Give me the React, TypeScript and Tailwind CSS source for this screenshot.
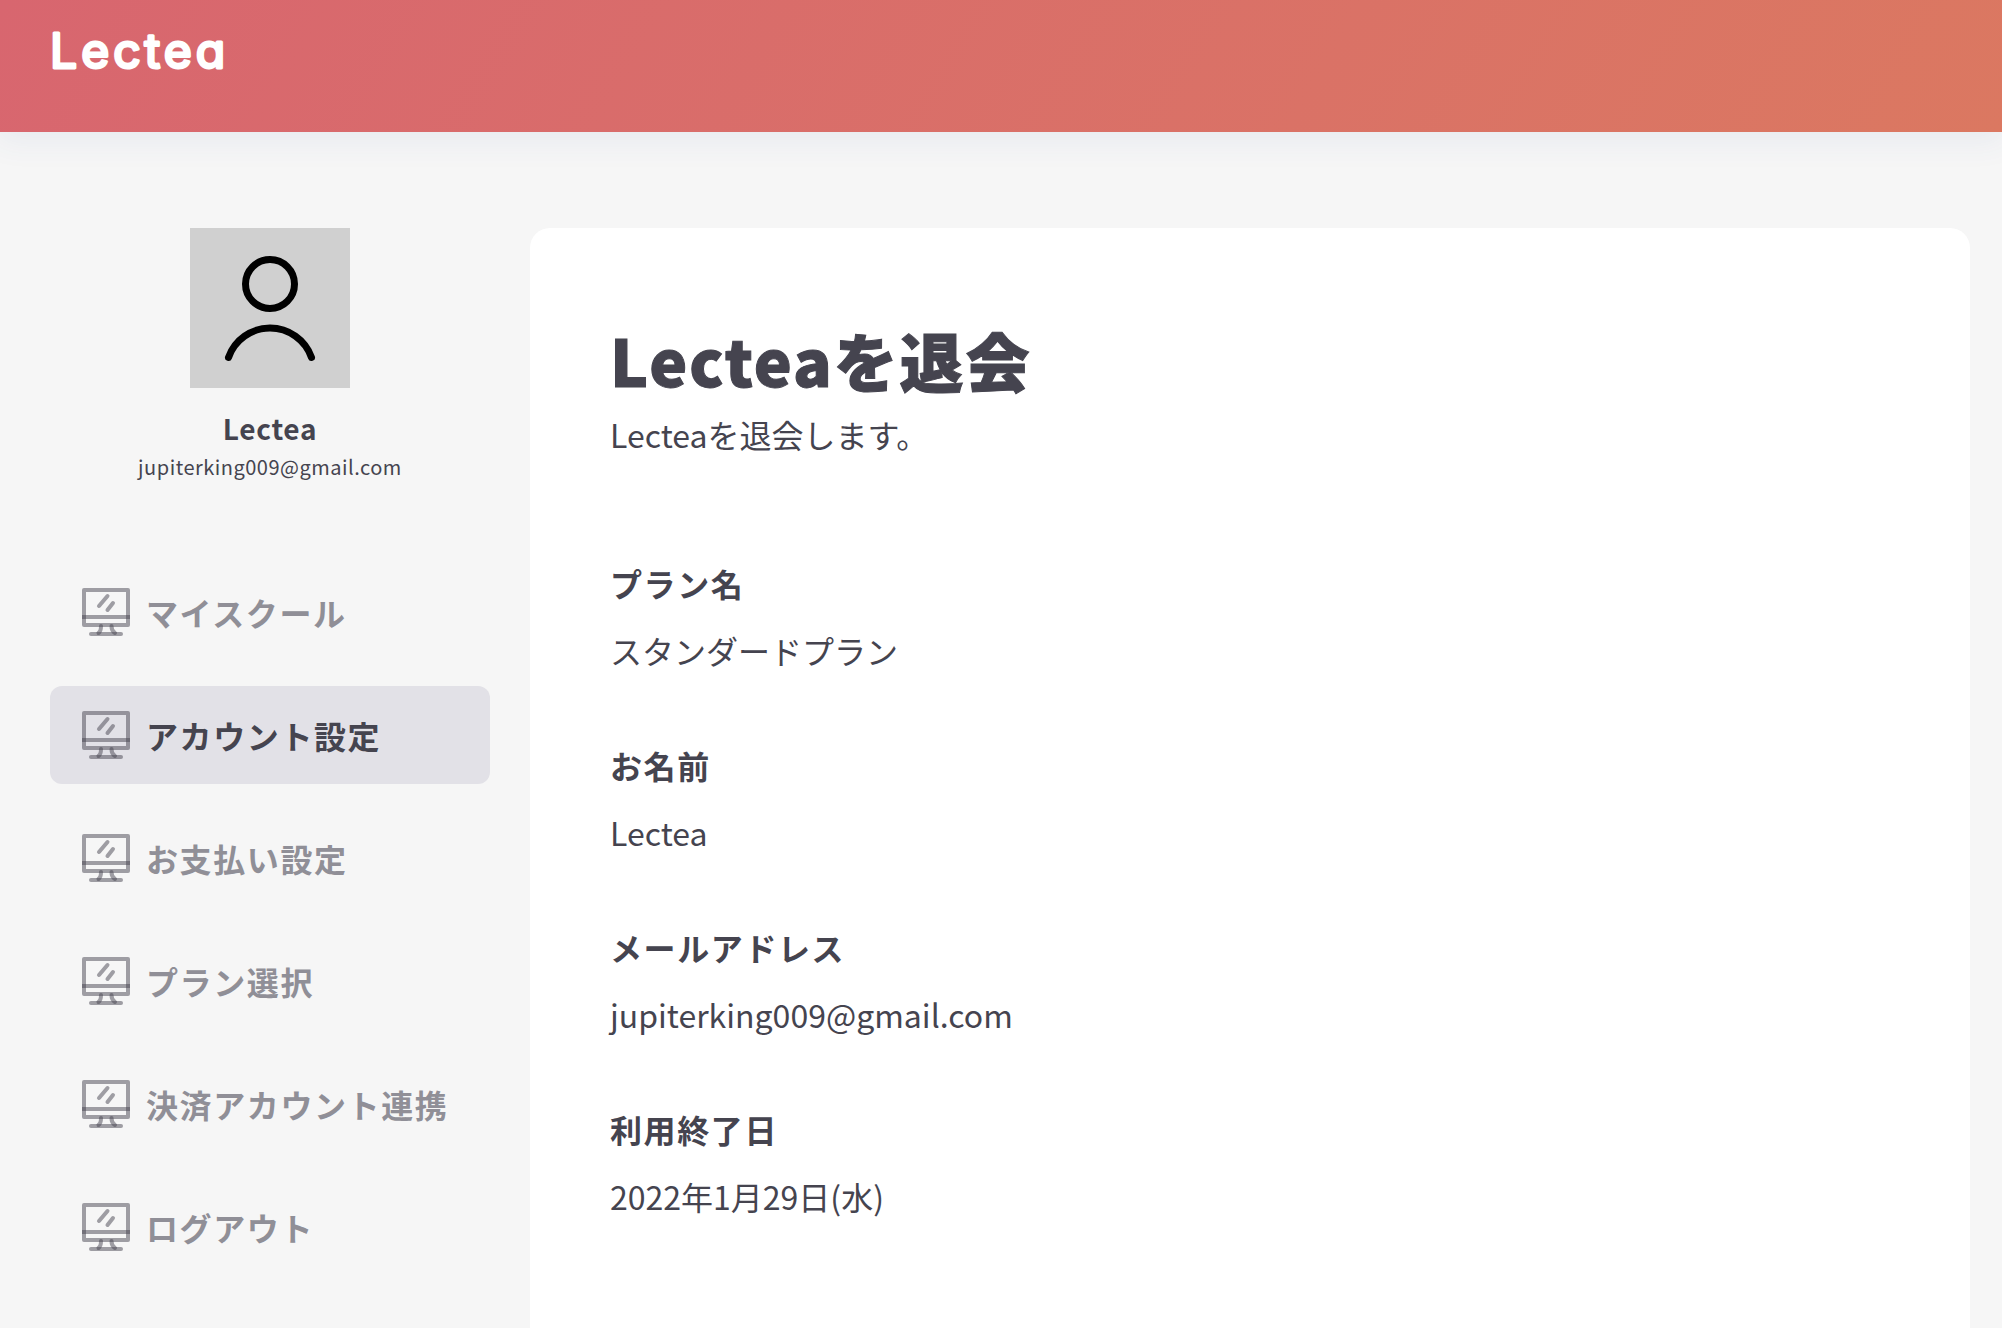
import clsx from "clsx";

const NAV_ITEMS = [
  { label: "マイスクール" },
  { label: "アカウント設定", active: true },
  { label: "お支払い設定" },
  { label: "プラン選択" },
  { label: "決済アカウント連携" },
  { label: "ログアウト" },
];

const DETAILS = [
  { label: "プラン名", value: "スタンダードプラン" },
  { label: "お名前", value: "Lectea" },
  { label: "メールアドレス", value: "jupiterking009@gmail.com" },
  { label: "利用終了日", value: "2022年1月29日(水)" },
];

function Logo() {
  return (
    <svg width="200" height="80" viewBox="0 0 200 80" role="img" aria-label="Lectea">
      <text
        x="0"
        y="56"
        className="fill-white stroke-white stroke-3 font-['Inter',sans-serif] text-[48px] font-normal tracking-[4px] [font-feature-settings:'cv11']"
        strokeLinejoin="round"
      >
        Lectea
      </text>
    </svg>
  );
}

function MonitorIcon() {
  return (
    <svg
      className="size-12 shrink-0 text-[#45444f]"
      viewBox="0 0 48 48"
      fill="none"
      stroke="currentColor"
      strokeWidth="4"
      strokeLinecap="round"
      strokeLinejoin="round"
      aria-hidden="true"
    >
      <path d="M2 2h44v35H2z" strokeOpacity="0.5" />
      <path d="M0 29h48" strokeOpacity="0.5" strokeLinecap="butt" />
      <path d="M9 46h30" strokeOpacity="0.5" />
      <path d="M19 38c0 4-.4 5.500-2.500 7" strokeOpacity="0.5" />
      <path d="M29.500 38c0 4 1 5.500 3.500 7" strokeOpacity="0.5" />
      <path d="M17 18 25.500 8" strokeOpacity="0.5" />
      <path d="M25.500 22 31 15" strokeOpacity="0.5" />
    </svg>
  );
}

function Avatar() {
  return (
    <div className="size-40 bg-[#d0d0d0]">
      <svg
        className="size-full"
        viewBox="0 0 160 160"
        fill="none"
        stroke="black"
        strokeWidth="7"
        strokeLinecap="round"
        aria-hidden="true"
      >
        <circle cx="80" cy="56" r="24.500" />
        <path d="M38.500 129.500a44 44 0 0 1 83 0" />
      </svg>
    </div>
  );
}

function Sidebar() {
  return (
    <aside className="w-[440px] shrink-0">
      <div className="flex flex-col items-center">
        <Avatar />
        <p className="mt-[18px] text-[28px] leading-[44px] font-bold tracking-wide">Lectea</p>
        <p className="text-[20px] leading-[34px] tracking-wide">jupiterking009@gmail.com</p>
      </div>
      <nav className="mt-[79px] flex flex-col gap-[25px]">
        {NAV_ITEMS.map(({ label, active }) => (
          <a
            key={label}
            href="#"
            aria-current={active ? "page" : undefined}
            className={clsx(
              "flex h-[98px] items-center gap-4 rounded-xl px-8 text-[32px] font-bold tracking-wider whitespace-nowrap",
              active ? "bg-[#e2e1e7] text-[#45444f]" : "text-[#908f97]"
            )}
          >
            <MonitorIcon />
            {label}
          </a>
        ))}
      </nav>
    </aside>
  );
}

export default function App() {
  return (
    <div className="flex h-screen flex-col overflow-hidden bg-[#f6f6f6] font-['Noto_Sans_CJK_JP',sans-serif] text-[#45444f]">
      <header className="h-[132px] shrink-0 bg-linear-120 from-[#d8666f] to-[#db7861] pt-3 pl-[50px] shadow-[0_6px_30px_4px_rgba(60,90,160,0.07)]">
        <a href="#" className="inline-block">
          <Logo />
        </a>
      </header>
      <div className="flex grow items-stretch gap-10 pt-24 pr-8 pl-[50px]">
        <Sidebar />
        <main className="grow rounded-t-[20px] bg-white px-20 pt-[85px]">
          <h1 className="text-[64px] leading-[92px] font-black tracking-[0.03em] [-webkit-text-stroke:1px_currentColor]">
            Lecteaを退会
          </h1>
          <p className="mt-1.5 text-[32px] leading-[46px]">Lecteaを退会します。</p>
          <dl className="mt-[103px] flex flex-col gap-[69px]">
            {DETAILS.map(({ label, value }) => (
              <div key={label} className="flex flex-col gap-[21px] text-[32px] leading-[46px]">
                <dt className="font-bold tracking-wider">{label}</dt>
                <dd>{value}</dd>
              </div>
            ))}
          </dl>
        </main>
      </div>
    </div>
  );
}
